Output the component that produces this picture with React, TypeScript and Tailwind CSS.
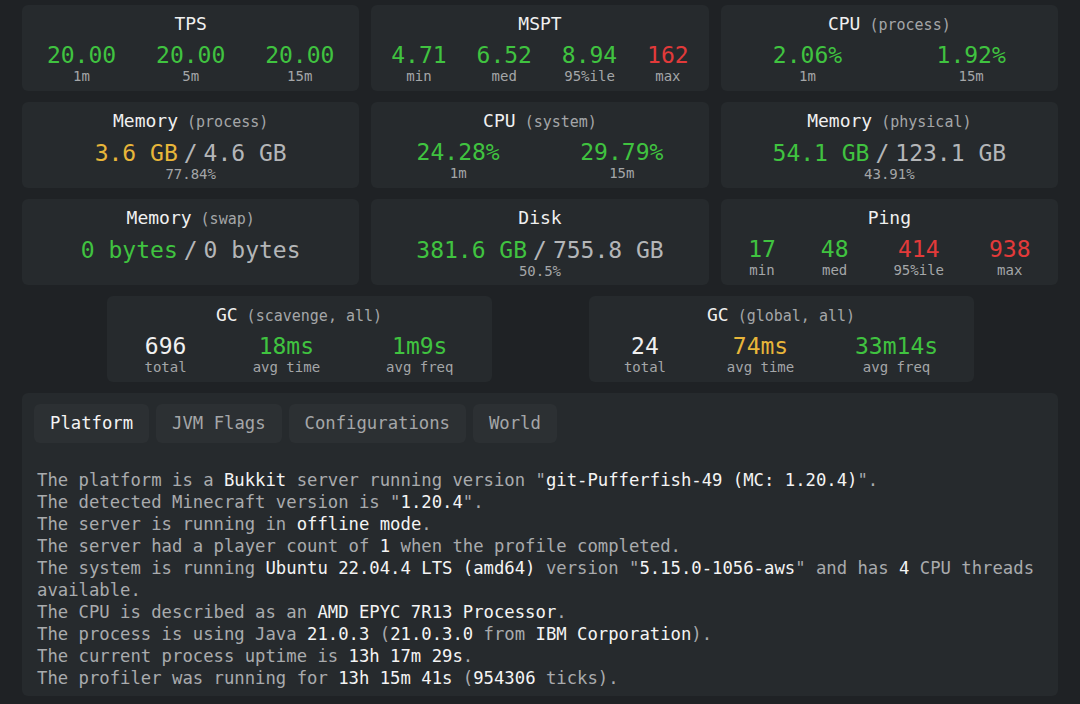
import React from "react";

type Tone = "green" | "yellow" | "red" | "white";

interface Stat {
  value: string;
  label: string;
  tone: Tone;
}

const toneClass: Record<Tone, string> = {
  green: "text-[#40c340]",
  yellow: "text-[#e8b63a]",
  red: "text-[#e23a3a]",
  white: "text-[#f0f0f0]",
};

const Title: React.FC<{ name: string; sub?: string }> = ({ name, sub }) => (
  <div className="h-[24px] leading-[24px] text-[18px] text-[#f0f0f0]">
    {name}
    {sub && <span className="ml-[9px] text-[15px] text-[#a4a6a8]">({sub})</span>}
  </div>
);

const StatCard: React.FC<{ name: string; sub?: string; stats: Stat[]; className?: string }> = ({
  name,
  sub,
  stats,
  className = "",
}) => (
  <div className={`bg-[#262a2d] rounded-md h-[86px] pt-[7px] text-center ${className}`}>
    <Title name={name} sub={sub} />
    <div className="mt-[6px] flex justify-around px-[5px]">
      {stats.map((s) => (
        <div key={s.label} className="flex flex-col items-center">
          <span className={`text-[23px] leading-[26px] ${toneClass[s.tone]}`}>{s.value}</span>
          <span className="text-[14px] leading-[16px] text-[#a4a6a8]">{s.label}</span>
        </div>
      ))}
    </div>
  </div>
);

const RatioCard: React.FC<{ name: string; sub?: string; used: string; total: string; tone: Tone; pct?: string }> = ({
  name,
  sub,
  used,
  total,
  tone,
  pct,
}) => (
  <div className="bg-[#262a2d] rounded-md h-[86px] pt-[7px] text-center">
    <Title name={name} sub={sub} />
    <div className="mt-[7px] text-[23px] leading-[26px] flex justify-center items-baseline">
      <span className={toneClass[tone]}>{used}</span>
      <span className="mx-[6px] text-[#b4b6b8]">/</span>
      <span className="text-[#b4b6b8]">{total}</span>
    </div>
    {pct && <div className="text-[14px] leading-[16px] text-[#a4a6a8]">{pct}</div>}
  </div>
);

const B: React.FC<{ children: React.ReactNode }> = ({ children }) => (
  <span className="text-[#f4f4f4]">{children}</span>
);

const tabs = ["Platform", "JVM Flags", "Configurations", "World"];

export default function App() {
  return (
    <div
      className="w-[1080px] h-[704px] overflow-hidden bg-[#1f2225] px-[22px] pt-[5px] flex flex-col gap-[11px]"
      style={{ fontFamily: '"DejaVu Sans Mono", "Liberation Mono", monospace' }}
    >
      <div className="grid grid-cols-3 gap-x-3 gap-y-[11px]">
        <StatCard
          name="TPS"
          stats={[
            { value: "20.00", label: "1m", tone: "green" },
            { value: "20.00", label: "5m", tone: "green" },
            { value: "20.00", label: "15m", tone: "green" },
          ]}
        />
        <StatCard
          name="MSPT"
          stats={[
            { value: "4.71", label: "min", tone: "green" },
            { value: "6.52", label: "med", tone: "green" },
            { value: "8.94", label: "95%ile", tone: "green" },
            { value: "162", label: "max", tone: "red" },
          ]}
        />
        <StatCard
          name="CPU"
          sub="process"
          stats={[
            { value: "2.06%", label: "1m", tone: "green" },
            { value: "1.92%", label: "15m", tone: "green" },
          ]}
        />
        <RatioCard name="Memory" sub="process" used="3.6 GB" total="4.6 GB" tone="yellow" pct="77.84%" />
        <StatCard
          name="CPU"
          sub="system"
          stats={[
            { value: "24.28%", label: "1m", tone: "green" },
            { value: "29.79%", label: "15m", tone: "green" },
          ]}
        />
        <RatioCard name="Memory" sub="physical" used="54.1 GB" total="123.1 GB" tone="green" pct="43.91%" />
        <RatioCard name="Memory" sub="swap" used="0 bytes" total="0 bytes" tone="green" />
        <RatioCard name="Disk" used="381.6 GB" total="755.8 GB" tone="green" pct="50.5%" />
        <StatCard
          name="Ping"
          stats={[
            { value: "17", label: "min", tone: "green" },
            { value: "48", label: "med", tone: "green" },
            { value: "414", label: "95%ile", tone: "red" },
            { value: "938", label: "max", tone: "red" },
          ]}
        />
      </div>

      <div className="flex justify-center gap-[97px]">
        <StatCard
          className="w-[385px]"
          name="GC"
          sub="scavenge, all"
          stats={[
            { value: "696", label: "total", tone: "white" },
            { value: "18ms", label: "avg time", tone: "green" },
            { value: "1m9s", label: "avg freq", tone: "green" },
          ]}
        />
        <StatCard
          className="w-[385px]"
          name="GC"
          sub="global, all"
          stats={[
            { value: "24", label: "total", tone: "white" },
            { value: "74ms", label: "avg time", tone: "yellow" },
            { value: "33m14s", label: "avg freq", tone: "green" },
          ]}
        />
      </div>

      <div className="bg-[#262a2d] rounded-md pt-[11px] pb-2 px-3 h-[303px]">
        <div className="flex gap-[7px]">
          {tabs.map((t, i) => (
            <div
              key={t}
              className={`h-[39px] px-4 flex items-center rounded-md bg-[#2c3033] text-[17.25px] ${
                i === 0 ? "text-[#f4f4f4]" : "text-[#a4a6a8]"
              }`}
            >
              {t}
            </div>
          ))}
        </div>
        <div className="mt-[26px] px-[3px] text-[17.25px] leading-[22px] text-[#a9abad]">
          <p>
            The platform is a <B>Bukkit</B> server running version "<B>git-Pufferfish-49 (MC: 1.20.4)</B>".
          </p>
          <p>
            The detected Minecraft version is "<B>1.20.4</B>".
          </p>
          <p>
            The server is running in <B>offline mode</B>.
          </p>
          <p>
            The server had a player count of <B>1</B> when the profile completed.
          </p>
          <p>
            The system is running <B>Ubuntu 22.04.4 LTS (amd64)</B> version "<B>5.15.0-1056-aws</B>" and has <B>4</B>
            <span> CPU threads</span>
            <br />
            <span>available.</span>
          </p>
          <p>
            The CPU is described as an <B>AMD EPYC 7R13 Processor</B>.
          </p>
          <p>
            The process is using Java <B>21.0.3</B> (<B>21.0.3.0</B> from <B>IBM Corporation</B>).
          </p>
          <p>
            The current process uptime is <B>13h 17m 29s</B>.
          </p>
          <p>
            The profiler was running for <B>13h 15m 41s</B> (<B>954306</B> ticks).
          </p>
        </div>
      </div>
    </div>
  );
}
